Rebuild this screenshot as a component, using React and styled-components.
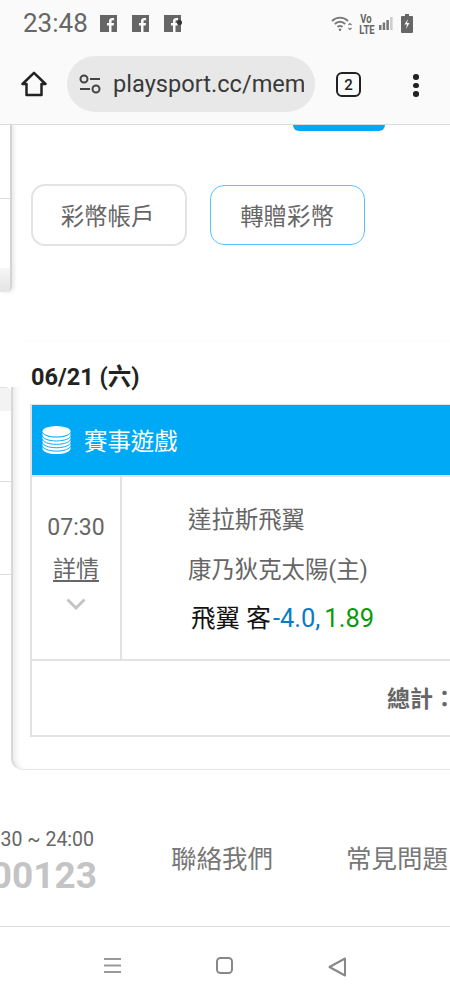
import React from "react";
import styled, { createGlobalStyle } from "styled-components";

const GlobalStyle = createGlobalStyle`
  html, body {
    margin: 0;
    padding: 0;
    background: #fff;
    overflow: hidden;
  }
  * {
    box-sizing: border-box;
  }
`;

const Phone = styled.div`
  width: 450px;
  height: 1000px;
  display: flex;
  flex-direction: column;
  overflow: hidden;
  background: #fff;
  font-family: Roboto, "Noto Sans CJK TC", sans-serif;
`;

const StatusBar = styled.div`
  height: 47px;
  flex-shrink: 0;
  display: flex;
  align-items: center;
  padding: 0 37px 0 23px;
  background: #fafafa;
  color: #666;
`;

const Clock = styled.span`
  width: 77px;
  font-size: 26px;
  line-height: 47px;
`;

const AppIcons = styled.div`
  display: flex;
  gap: 14px;
`;

const SystemIcons = styled.div`
  margin-left: auto;
  display: flex;
  align-items: center;
`;

const VoLte = styled.span`
  width: 14px;
  margin: 0 6px 0 7px;
  font-size: 10px;
  font-weight: 700;
  line-height: 9px;
  text-align: center;
  transform: scale(0.95, 1.2);
`;

const Toolbar = styled.div`
  height: 78px;
  flex-shrink: 0;
  display: flex;
  align-items: flex-start;
  padding: 9px 0 0 21px;
  background: #fafafa;
  border-bottom: 1px solid #dcdcdc;
`;

const HomeIcon = styled.svg`
  margin-top: 15px;
  flex-shrink: 0;
`;

const UrlPill = styled.div`
  width: 248px;
  height: 56px;
  margin-left: 20px;
  display: flex;
  align-items: center;
  padding: 0 11px 0 12px;
  border-radius: 28px;
  background: #e8e8e8;
`;

const UrlText = styled.span`
  margin-left: 12px;
  font-size: 23.6px;
  color: #3a3a3a;
  white-space: nowrap;
  overflow: hidden;
`;

const TabCount = styled.div`
  width: 25px;
  height: 25px;
  margin: 16px 0 0 21px;
  display: flex;
  align-items: center;
  justify-content: center;
  border: 2.5px solid #222;
  border-radius: 6px;
  font-size: 15px;
  font-weight: 500;
  color: #222;
`;

const MoreDots = styled.div`
  margin: 18px 0 0 52px;
  display: flex;
  flex-direction: column;
  gap: 3px;

  span {
    width: 5.5px;
    height: 5.5px;
    border-radius: 50%;
    background: #222;
  }
`;

const Content = styled.div`
  flex: 1;
  min-height: 0;
  display: flex;
  flex-direction: column;
  overflow: hidden;
`;

const TopSection = styled.section`
  height: 215px;
  flex-shrink: 0;
  display: flex;
  align-items: flex-start;
`;

const SideStub = styled.div`
  width: 12px;
  height: 167px;
  flex-shrink: 0;
  display: flex;
  flex-direction: column;
  border-right: 2px solid #d4d4d4;
  border-radius: 0 0 5px 0;
  box-shadow: 2px 0 4px rgba(0, 0, 0, 0.1);
`;

const StubRow = styled.div`
  height: ${(props) => props.$height}px;
  flex-shrink: 0;
  border-bottom: 1px solid #ddd;
`;

const StubFoot = styled.div`
  height: 24px;
  margin-top: auto;
  border-radius: 0 0 4px 0;
  background: linear-gradient(#f6f6f6, #e4e4e4);
`;

const ActionColumn = styled.div`
  flex: 1;
  padding-left: 19px;
`;

const TopButton = styled.div`
  width: 92px;
  height: 6px;
  margin-left: 262px;
  border-radius: 0 0 14px 14px;
  background: #00a9f7;
`;

const TabRow = styled.div`
  margin-top: 53px;
  display: flex;
  align-items: center;
  gap: 23px;
`;

const TabButton = styled.div`
  width: ${(props) => (props.$active ? 155 : 156)}px;
  height: ${(props) => (props.$active ? 60 : 62)}px;
  display: flex;
  align-items: center;
  justify-content: center;
  padding-right: ${(props) => (props.$active ? 1 : 3)}px;
  border: ${(props) => (props.$active ? "1px solid #55c4fa" : "2px solid #e3e3e3")};
  border-radius: 14px;
  font-size: 23.4px;
  color: #666;
`;

const MainSection = styled.section`
  height: 430px;
  flex-shrink: 0;
  display: flex;
  align-items: flex-start;
`;

const SideMenu = styled.div`
  width: 11px;
  margin-top: 47px;
  flex-shrink: 0;
`;

const MenuHead = styled.div`
  height: 24px;
  border-top: 1px solid #e2e2e2;
  border-radius: 0 6px 0 0;
  background: #f3f3f3;
`;

const MenuRow = styled.div`
  height: ${(props) => props.$height}px;
  border-bottom: 1px solid #ddd;
`;

/* the side menu starts lower than the panel, so the top of the edge line is hidden */
const Panel = styled.div`
  position: relative;
  flex: 1;
  min-width: 0;
  height: 430px;
  padding: 23px 0 0 17px;
  border-bottom: 1px solid #e8e8e8;
  border-left: 2px solid #d8d8d8;
  border-radius: 0 0 0 12px;
  box-shadow: inset 6px 0 6px -4px rgba(0, 0, 0, 0.1);

  &::before {
    content: "";
    position: absolute;
    top: 0;
    left: -2px;
    width: 12px;
    height: 47px;
    background: #fff;
  }
`;

const DateTitle = styled.h2`
  margin: 0 0 0 1px;
  font-size: 23.5px;
  font-weight: 700;
  line-height: 28px;
  color: #222;
`;

const GameTable = styled.div`
  width: 520px;
  height: 333px;
  margin-top: 13px;
  border: 2px solid #e2e2e2;
  border-top-width: 1px;
`;

const TableHeader = styled.div`
  height: 70px;
  display: flex;
  align-items: center;
  gap: 13px;
  padding-left: 10px;
  background: #00a9f5;
  font-size: 23.4px;
  color: #fff;
`;

const GameRow = styled.div`
  height: 186px;
  display: flex;
  border-top: 2px solid #e2e2e2;
  border-bottom: 2px solid #e2e2e2;
`;

const TimeCell = styled.div`
  width: 90px;
  flex-shrink: 0;
  display: flex;
  flex-direction: column;
  align-items: center;
  padding-top: 35px;
  border-right: 2px solid #e2e2e2;
  color: #666;
  font-size: 23px;
  line-height: 32px;
`;

const DetailLink = styled.a`
  margin-top: 10px;
  text-decoration: underline;
  text-underline-offset: 3px;
  color: #666;
`;

const ChevronIcon = styled.svg`
  margin-top: 12px;
`;

const TeamCell = styled.div`
  display: flex;
  flex-direction: column;
  gap: 16px;
  padding: 26px 0 0 66px;
  font-size: 23.4px;
  line-height: 34px;
  color: #666;
`;

const BetLine = styled.div`
  margin: -2px 0 0 3px;
  font-size: 24.6px;
  color: #111;
  white-space: nowrap;
`;

const Spread = styled.span`
  margin-left: 2px;
  font-size: 25.5px;
  color: #0a7cc4;
`;

const Odds = styled.span`
  margin-left: 4px;
  font-size: 25.5px;
  color: #0a9a0a;
`;

const TotalRow = styled.div`
  height: 72px;
  display: flex;
  align-items: center;
  padding-left: 355px;
  font-size: 23px;
  font-weight: 700;
  color: #666;
  white-space: nowrap;
`;

const FooterLinks = styled.footer`
  flex: 1;
  display: flex;
  align-items: flex-start;
  padding-top: 58px;
`;

const ServiceInfo = styled.div`
  width: 94px;
  flex-shrink: 0;
  display: flex;
  flex-direction: column;
  align-items: flex-end;
  white-space: nowrap;
`;

const ServiceHours = styled.span`
  font-size: 19.5px;
  line-height: 24px;
  color: #666;
`;

const ServicePhone = styled.span`
  margin: 2px -3px 0 0;
  font-size: 37px;
  font-weight: 700;
  line-height: 44px;
  color: #c4c4c4;
`;

const FooterLink = styled.a`
  margin: 12px 0 0 ${(props) => props.$gap}px;
  font-size: 25.5px;
  line-height: 38px;
  color: #777;
  white-space: nowrap;
`;

const NavBar = styled.nav`
  height: 74px;
  flex-shrink: 0;
  display: flex;
  align-items: flex-start;
  justify-content: center;
  gap: 95px;
  padding-top: 30px;
  border-top: 1px solid #dcdcdc;
  background: #fff;
`;

const FacebookIcon = ({ dot }) => (
  <svg width="18" height="17" viewBox="0 0 18 17">
    <rect width="17" height="17" fill="#666" />
    <path
      d="M11.5 17V10.5h2.2l.3-2.5h-2.5V6.5c0-.8.3-1.2 1.2-1.2H14V3.1c-.4 0-1-.1-1.7-.1-1.9 0-3.3 1.1-3.3 3.2V8H7v2.5h2V17z"
      fill="#fafafa"
    />
    {dot && <circle cx="15.5" cy="7.5" r="2.5" fill="#333" />}
  </svg>
);

const WifiIcon = () => (
  <svg width="21" height="17" viewBox="0 0 21 17" fill="none" stroke="#777" strokeWidth="1.8">
    <path d="M1 6c4.600-4.600 11.400-4.600 16 0" />
    <path d="M3.800 9c3-3 7.400-3 10.400 0" />
    <path d="M6.500 12c1.500-1.500 3.500-1.500 5 0" />
    <circle cx="9" cy="14.800" r="1.300" fill="#777" stroke="none" />
    <path d="M17.500 10l1.500-1.500 1.500 1.500M17.500 13l1.500 1.500 1.500-1.500" strokeWidth="1.200" />
  </svg>
);

const SignalIcon = () => (
  <svg width="14" height="13" viewBox="0 0 14 13" fill="#777">
    <rect x="0" y="8" width="2.500" height="5" />
    <rect x="3.700" y="5.500" width="2.500" height="7.500" />
    <rect x="7.400" y="3" width="2.500" height="10" />
    <rect x="11.100" y="0" width="2.500" height="13" fill="#ccc" />
  </svg>
);

const BatteryIcon = () => (
  <svg width="12" height="19" viewBox="0 0 12 19" style={{ marginLeft: 8 }}>
    <path d="M4 0h4v2h3a1 1 0 0 1 1 1v15a1 1 0 0 1-1 1H1a1 1 0 0 1-1-1V3a1 1 0 0 1 1-1h3z" fill="#666" />
    <path d="M7 5L3.500 10.500H6L5 15l3.500-6H6z" fill="#fafafa" />
  </svg>
);

const TuneIcon = () => (
  <svg width="22" height="20" viewBox="0 0 22 20" fill="none" stroke="#444" strokeWidth="2" style={{ flexShrink: 0 }}>
    <circle cx="5" cy="5" r="3.500" />
    <path d="M11 5h10M1 15h10" />
    <circle cx="17" cy="15" r="3.500" />
  </svg>
);

const CoinsIcon = () => (
  <svg width="29" height="30" viewBox="0 0 30 30" fill="none" style={{ flexShrink: 0 }}>
    <ellipse cx="15" cy="6" rx="14.500" ry="5.500" fill="#fff" />
    <path d="M.5 7v17c0 3 6.500 5.500 14.500 5.500s14.500-2.500 14.500-5.500V7c0 3-6.500 5.500-14.500 5.500S.5 10 .5 7z" fill="#fff" />
    <g stroke="#00a9f5" strokeWidth="1">
      <path d="M.5 10.500c0 3 6.500 5.500 14.500 5.500s14.500-2.500 14.500-5.500" />
      <path d="M.5 14c0 3 6.500 5.500 14.500 5.500s14.500-2.500 14.500-5.500" />
      <path d="M.5 17.500c0 3 6.500 5.500 14.500 5.500s14.500-2.500 14.500-5.500" />
      <path d="M.5 21c0 3 6.500 5.500 14.500 5.500s14.500-2.500 14.500-5.500" />
    </g>
  </svg>
);

export default function App() {
  return (
    <Phone>
      <GlobalStyle />

      <StatusBar>
        <Clock>23:48</Clock>
        <AppIcons>
          <FacebookIcon />
          <FacebookIcon />
          <FacebookIcon dot />
        </AppIcons>
        <SystemIcons>
          <WifiIcon />
          <VoLte>Vo LTE</VoLte>
          <SignalIcon />
          <BatteryIcon />
        </SystemIcons>
      </StatusBar>

      <Toolbar>
        <HomeIcon width="26" height="26" viewBox="0 0 26 26" fill="none" stroke="#222" strokeWidth="2.500" strokeLinejoin="round">
          <path d="M1.500 13L13 1.800 24.500 13H20.500V24H5.500V13z" />
        </HomeIcon>
        <UrlPill>
          <TuneIcon />
          <UrlText>playsport.cc/member</UrlText>
        </UrlPill>
        <TabCount>2</TabCount>
        <MoreDots>
          <span />
          <span />
          <span />
        </MoreDots>
      </Toolbar>

      <Content>
        <TopSection>
          <SideStub>
            <StubRow $height={74} />
            <StubFoot />
          </SideStub>
          <ActionColumn>
            <TopButton />
            <TabRow>
              <TabButton>彩幣帳戶</TabButton>
              <TabButton $active>轉贈彩幣</TabButton>
            </TabRow>
          </ActionColumn>
        </TopSection>

        <MainSection>
          <SideMenu>
            <MenuHead />
            <MenuRow $height={71} />
            <MenuRow $height={93} />
          </SideMenu>
          <Panel>
            <DateTitle>06/21 (六)</DateTitle>
            <GameTable>
              <TableHeader>
                <CoinsIcon />
                賽事遊戲
              </TableHeader>
              <GameRow>
                <TimeCell>
                  07:30
                  <DetailLink>詳情</DetailLink>
                  <ChevronIcon width="20" height="12" viewBox="0 0 20 12" fill="none" stroke="#c4c4c4" strokeWidth="3">
                    <path d="M1.500 1.500L10 10l8.500-8.500" />
                  </ChevronIcon>
                </TimeCell>
                <TeamCell>
                  <div>達拉斯飛翼</div>
                  <div>康乃狄克太陽(主)</div>
                  <BetLine>
                    飛翼 客
                    <Spread>-4.0,</Spread>
                    <Odds>1.89</Odds>
                  </BetLine>
                </TeamCell>
              </GameRow>
              <TotalRow>總計：</TotalRow>
            </GameTable>
          </Panel>
        </MainSection>

        <FooterLinks>
          <ServiceInfo>
            <ServiceHours>09:30 ~ 24:00</ServiceHours>
            <ServicePhone>00123</ServicePhone>
          </ServiceInfo>
          <FooterLink $gap={77}>聯絡我們</FooterLink>
          <FooterLink $gap={73}>常見問題</FooterLink>
        </FooterLinks>
      </Content>

      <NavBar>
        <svg width="17" height="17" viewBox="0 0 17 17" stroke="#999" strokeWidth="2">
          <path d="M0 2h17M0 8.500h17M0 15h17" />
        </svg>
        <svg width="17" height="17" viewBox="0 0 17 17" fill="none" stroke="#888" strokeWidth="2">
          <rect x="1" y="1" width="15" height="15" rx="3.500" />
        </svg>
        <svg width="18" height="20" viewBox="0 0 18 20" fill="none" stroke="#888" strokeWidth="2" strokeLinejoin="round">
          <path d="M17 1.500v17L1.500 10z" />
        </svg>
      </NavBar>
    </Phone>
  );
}
